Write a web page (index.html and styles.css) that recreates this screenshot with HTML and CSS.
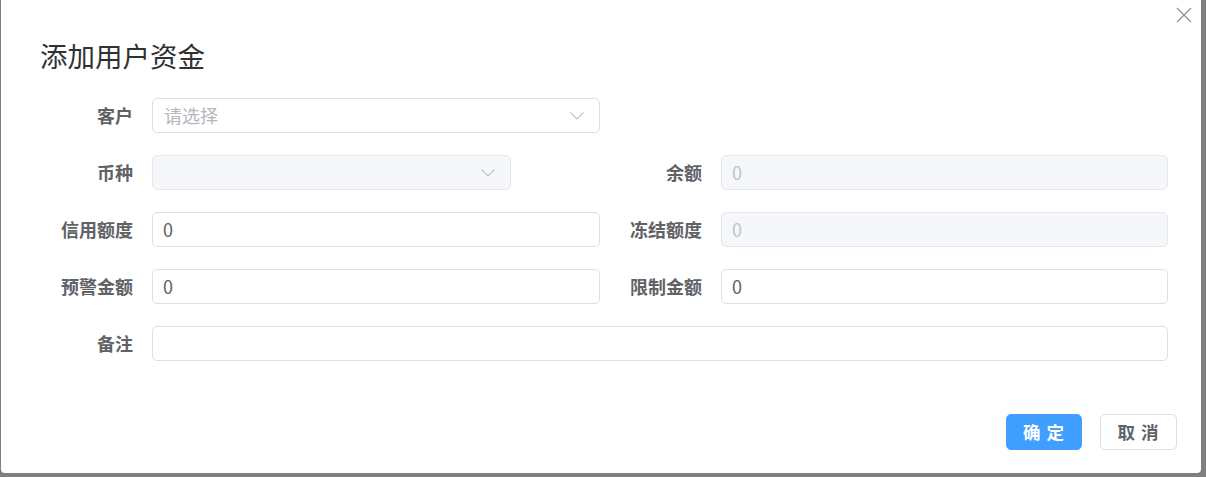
FILE: index.html
```html
<!DOCTYPE html>
<html lang="zh-CN">
<head>
<meta charset="utf-8">
<title>添加用户资金</title>
<link rel="stylesheet" href="styles.css">
</head>
<body>
<div class="dialog">
  <div class="dialog-header">
    <div class="dialog-title">添加用户资金</div>
    <button class="dialog-close" aria-label="关闭">
      <svg width="16" height="16" viewBox="0 0 16 16"><path d="M1 1 L15 15 M15 1 L1 15" stroke="#909399" stroke-width="1.3" fill="none"/></svg>
    </button>
  </div>
  <div class="form">
    <label class="label">客户</label>
    <div class="select">
      <span class="placeholder">请选择</span>
      <svg class="arrow" width="14" height="8" viewBox="0 0 14 8"><polyline points="0.5,0.5 7,7 13.5,0.5" fill="none" stroke="#c0c4cc" stroke-width="1.2"/></svg>
    </div>
    <div class="span-rest"></div>

    <label class="label">币种</label>
    <div class="select select-disabled select-short">
      <span class="placeholder"></span>
      <svg class="arrow" width="14" height="8" viewBox="0 0 14 8"><polyline points="0.5,0.5 7,7 13.5,0.5" fill="none" stroke="#c0c4cc" stroke-width="1.2"/></svg>
    </div>
    <div></div>
    <label class="label">余额</label>
    <input class="input" value="0" disabled>

    <label class="label">信用额度</label>
    <input class="input" value="0">
    <div></div>
    <label class="label">冻结额度</label>
    <input class="input" value="0" disabled>

    <label class="label">预警金额</label>
    <input class="input" value="0">
    <div></div>
    <label class="label">限制金额</label>
    <input class="input" value="0">

    <label class="label">备注</label>
    <input class="input input-wide" value="">
  </div>
  <div class="dialog-footer">
    <button class="btn btn-primary">确 定</button>
    <button class="btn">取 消</button>
  </div>
</div>
</body>
</html>
```
FILE: styles.css
```css
html, body {
  margin: 0;
  padding: 0;
}
body {
  background: #808080;
  width: 1206px;
  height: 477px;
  overflow: hidden;
  font-family: "Noto Sans CJK SC", "Noto Sans", sans-serif;
}
.dialog {
  margin-left: 1px;
  width: 1200px;
  height: 473px;
  background: #ffffff;
  border-radius: 0 0 4px 4px;
  box-sizing: border-box;
  display: flex;
  flex-direction: column;
}
.dialog-header {
  display: flex;
  justify-content: space-between;
  align-items: flex-start;
  height: 98px;
  padding-left: 39px;
  box-sizing: border-box;
}
.dialog-title {
  margin-top: 37px;
  font-size: 27.5px;
  line-height: 37px;
  color: #303133;
}
.dialog-close {
  margin-top: 7px;
  margin-right: 9px;
  padding: 0;
  border: 0;
  background: transparent;
  width: 16px;
  height: 16px;
  display: flex;
}
.form {
  display: grid;
  grid-template-columns: 100px 448px 21px 100px 447px;
  grid-auto-rows: 35px;
  row-gap: 22px;
  margin-left: 51px;
}
.label {
  display: flex;
  align-items: center;
  justify-content: flex-end;
  padding-right: 19px;
  padding-bottom: 2px;
  font-size: 18px;
  font-weight: bold;
  color: #606266;
}
.span-rest {
  grid-column: 3 / 6;
}
.select, .input {
  box-sizing: border-box;
  height: 35px;
  border: 1px solid #dcdfe6;
  border-radius: 5px;
  background: #ffffff;
  font-family: inherit;
  font-size: 18px;
  color: #606266;
  padding: 0 10px 2px;
  margin: 0;
  outline: none;
}
.select {
  display: flex;
  align-items: center;
  justify-content: space-between;
  padding: 0 15px 0 11px;
}
.placeholder {
  color: #b4b7bd;
  margin-bottom: 2px;
}
.select-disabled {
  background: #f5f7fa;
  border-color: #e4e7ed;
}
.select-short {
  width: 359px;
}
.input {
  width: 100%;
}
.input:disabled {
  background: #f5f7fa;
  border-color: #e4e7ed;
  color: #c0c4cc;
  -webkit-text-fill-color: #c0c4cc;
  opacity: 1;
}
.input-wide {
  grid-column: 2 / 6;
}
.dialog-footer {
  margin-top: auto;
  display: flex;
  justify-content: flex-end;
  gap: 18px;
  padding: 0 24px 23px 0;
}
.btn {
  box-sizing: border-box;
  width: 77px;
  height: 36px;
  border: 1px solid #dcdfe6;
  border-radius: 5px;
  background: #ffffff;
  color: #606266;
  font-family: inherit;
  font-size: 17.5px;
  font-weight: bold;
  padding: 0 0 2px;
  letter-spacing: 1px;
}
.btn-primary {
  width: 76px;
  background: #409eff;
  border-color: #409eff;
  color: #ffffff;
}
```
